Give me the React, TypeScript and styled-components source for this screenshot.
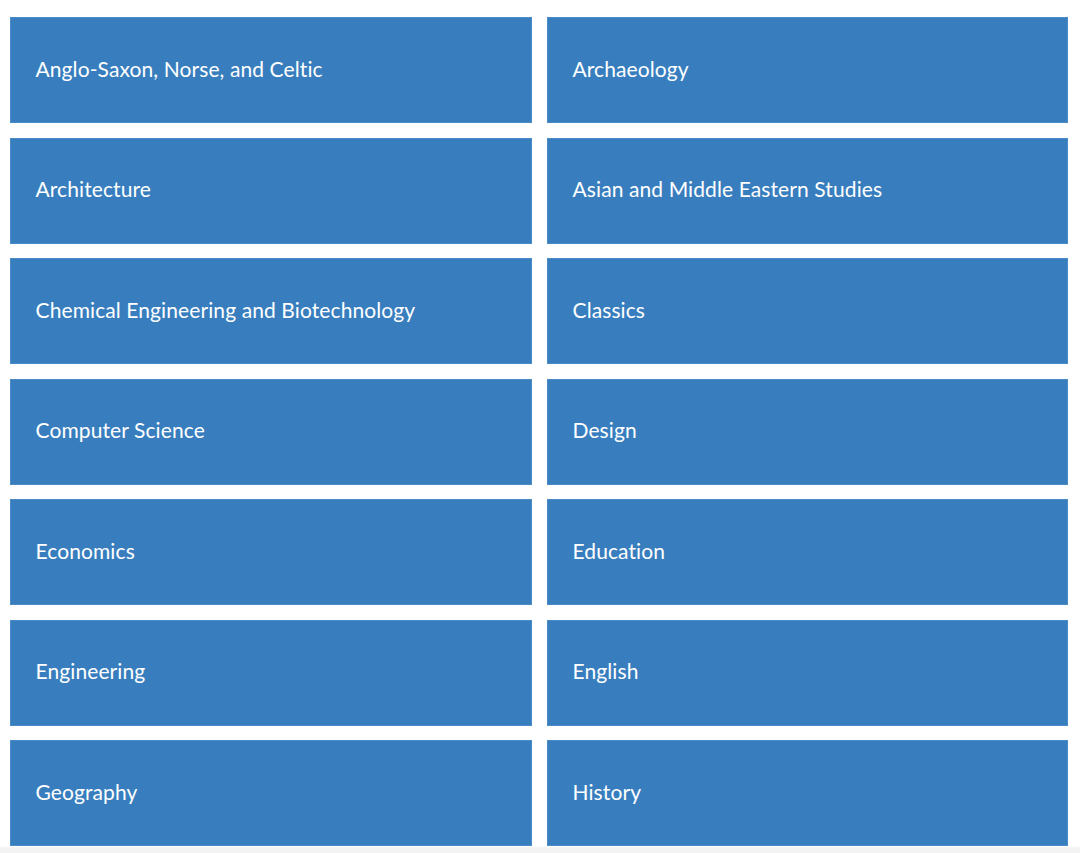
import React from "react";
import styled, { createGlobalStyle } from "styled-components";

const Global = createGlobalStyle`
  html, body { margin: 0; padding: 0; background: #ffffff; }
  body { font-family: Lato, "Open Sans", sans-serif; }
`;

const Page = styled.div`
  position: relative;
  width: 1080px;
  height: 853px;
  overflow: hidden;
  background: linear-gradient(to bottom, #ffffff 0, #ffffff 846px, #f3f3f3 848px, #f3f3f3 100%);
`;

const Grid = styled.div`
  display: grid;
  grid-template-columns: 522px 521px;
  grid-auto-rows: 106px;
  column-gap: 15px;
  row-gap: 14.5px;
  padding: 17px 0 0 10px;
`;

const Tile = styled.a`
  display: flex;
  align-items: center;
  padding-left: 25.5px;
  padding-bottom: 4px;
  box-sizing: border-box;
  background: #387ebe;
  box-shadow: inset 0 0 0 1px #4a8cc8;
  color: #ffffff;
  font-family: Lato, "Open Sans", sans-serif;
  font-size: 21px;
  font-weight: 400;
  letter-spacing: 0.1px;
  text-decoration: none;
`;

const subjects = [
  "Anglo-Saxon, Norse, and Celtic",
  "Archaeology",
  "Architecture",
  "Asian and Middle Eastern Studies",
  "Chemical Engineering and Biotechnology",
  "Classics",
  "Computer Science",
  "Design",
  "Economics",
  "Education",
  "Engineering",
  "English",
  "Geography",
  "History",
];

export default function App() {
  return (
    <Page>
      <Global />
      <Grid>
        {subjects.map((s) => (
          <Tile key={s} href="#">
            {s}
          </Tile>
        ))}
      </Grid>
    </Page>
  );
}
